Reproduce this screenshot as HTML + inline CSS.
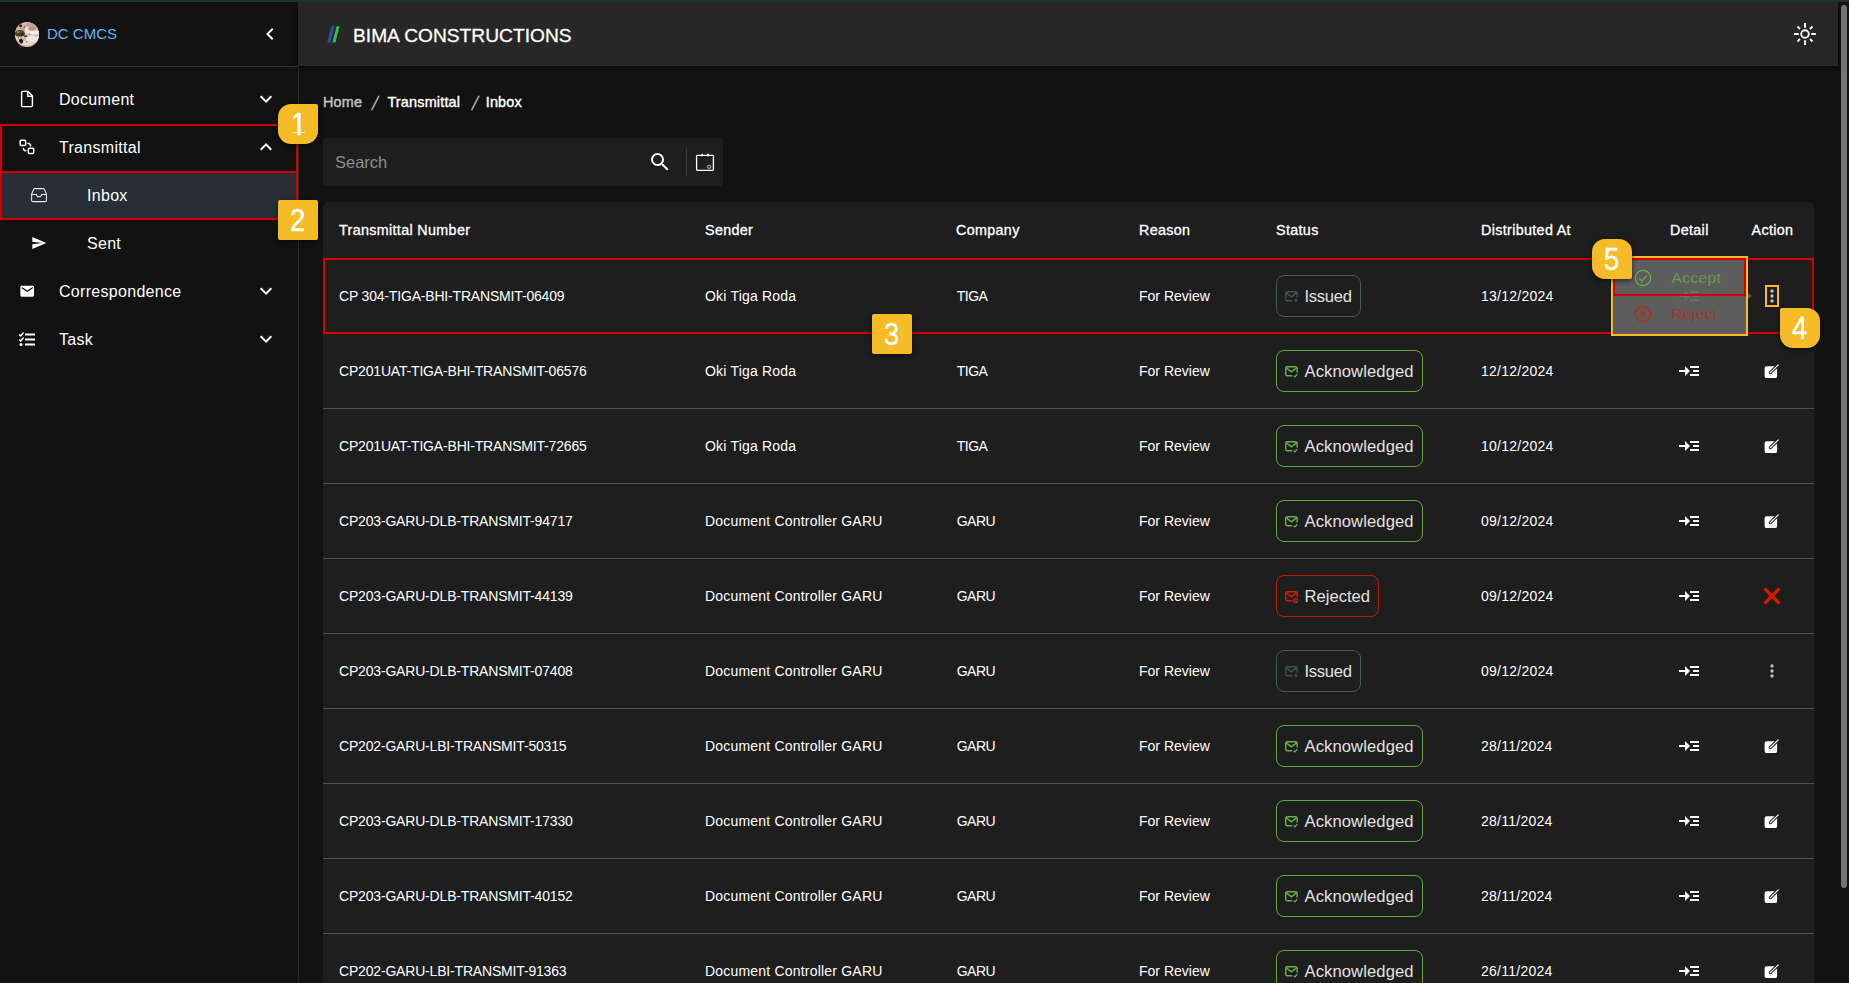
<!DOCTYPE html>
<html lang="en">
<head>
<meta charset="utf-8">
<title>DC CMCS - Transmittal Inbox</title>
<style>
*{box-sizing:border-box;margin:0;padding:0}
html,body{width:1849px;height:983px;overflow:hidden;background:#121212}
body{position:relative;font-family:"Liberation Sans",sans-serif;color:#fff;font-size:14px}
svg{display:block;position:absolute;overflow:visible}
.topstrip{position:absolute;left:0;top:0;width:1849px;height:2px;background:#203429}

/* ---------- sidebar ---------- */
.sidebar{position:absolute;left:0;top:2px;width:299px;height:981px;background:#121212;border-right:1px solid #2b2b2b}
.sb-head{position:absolute;left:0;top:0;width:298px;height:65px;border-bottom:1px solid #333}
.avatar{position:absolute;left:14.8px;top:20.3px;width:24.4px;height:24.4px;border-radius:50%;overflow:hidden;background:#d5bfb4}
.brand{position:absolute;left:47px;top:23px;font-size:15px;line-height:18px;color:#64b5f6;white-space:nowrap}
.menu{position:absolute;left:0;top:73px;width:298px;list-style:none}
.menu li{position:relative;height:48px;width:298px}
.menu li .lbl{position:absolute;left:59px;top:15.4px;font-size:16px;letter-spacing:.3px;line-height:20px;white-space:nowrap;color:#fff}
.menu li.sub .lbl{left:87px}
.menu li.active{background:#272e37}
.menu li .chev{left:254px;top:12.3px}
.redbox{position:absolute;border:2px solid #d40000;pointer-events:none}

/* ---------- top bar ---------- */
.topbar{position:absolute;left:298px;top:2px;width:1540px;height:64px;background:#272727;box-shadow:0 2px 4px rgba(0,0,0,.55)}
.title{position:absolute;left:55px;top:21.6px;font-size:19.2px;line-height:24px;white-space:nowrap;color:#fff;-webkit-text-stroke:.3px #fff}

/* ---------- content ---------- */
.crumbs{position:absolute;left:323px;top:92px;height:20px;font-size:14.4px;letter-spacing:.2px;line-height:20px;white-space:nowrap;-webkit-text-stroke:.4px currentColor}
.crumbs span{position:absolute;top:0}
.crumbs .c-home{left:0;color:#c4c4c4}
.crumbs .sep{left:46.8px;color:#b8b8b8;font-size:19.6px;letter-spacing:0;-webkit-text-stroke:0;transform:skewX(-14deg);transform-origin:0 100%;top:.8px}
.crumbs .c-b{color:#fff}
.search{position:absolute;left:323px;top:138px;width:400px;height:48px;border-radius:4px;background:#1e1e1e}
.search .ph{position:absolute;left:12px;top:14px;font-size:16.5px;line-height:20px;color:#8d8d8d}
.search .vdiv{position:absolute;left:363px;top:10px;width:1px;height:28px;background:#3b3b3b}

.table{position:absolute;left:323px;top:202px;width:1491px;height:800px;background:#1e1e1e;border-radius:6px 6px 0 0}
.thead{position:relative;height:56px}
.th{position:absolute;top:18px;font-size:14.3px;letter-spacing:.35px;line-height:20px;white-space:nowrap;color:#fff;-webkit-text-stroke:.32px #fff}
.tr{position:relative;height:75px;border-top:1px solid #505050}
.tr.first{border-top-color:transparent}
.td{position:absolute;top:27px;font-size:14px;line-height:20px;white-space:nowrap;color:#fff}
.c1{left:16px}.td.c1{letter-spacing:-.18px}.td.c3{left:633.7px;letter-spacing:-.5px}.td.c6{letter-spacing:.25px}.td.c2{letter-spacing:.2px}.c2{left:382px}.c3{left:633px}.c4{left:816px}.c5{left:953px}.c6{left:1158px}
.th.c7{left:1347px}.th.c8{left:1428.5px}
.chip{position:absolute;left:953px;top:16px;height:42px;border:1px solid #43585b;border-radius:8px;padding:0 8px 0 27.5px;white-space:nowrap}
.chip-t{position:relative;top:1px;font-size:16.6px;line-height:40px;color:#e2e2e2}
.issued .chip-t{letter-spacing:-.3px}.ack .chip-t{letter-spacing:.1px}
.chip-ic{left:8.3px;top:15px}
.ic-detail{left:1354px;top:24.8px}
.ic-edit{left:1440.5px;top:27.5px}
.ic-x{left:1437px;top:25px}
.ic-dots{left:1438.9px;top:26.9px}

/* ---------- popup ---------- */
.popup{position:absolute;left:1611px;top:256px;width:137px;height:80px;border:2px solid #f5bc27;background:rgba(98,98,98,.93)}
.popup{padding-top:2px}
.popup .pi{position:relative;height:36px}
.popup .pt{position:absolute;left:58.5px;top:8.1px;font-size:15.5px;letter-spacing:.4px;line-height:20px;-webkit-text-stroke:.35px #606060}
.popup .rej .pt{top:7.7px}
.pop-arrow{position:absolute;left:1748px;top:292.8px;width:0;height:0;border:3.2px solid transparent;border-left:4px solid #585858;border-right-width:0}
.dotbox{position:absolute;left:1765px;top:285px;width:14px;height:22px;border:2px solid #f5bc27}

/* ---------- scrollbar ---------- */
.scroll-thumb{position:absolute;left:1841px;top:5px;width:6px;height:883px;border-radius:3px;background:#747474}

/* ---------- badges ---------- */
.badge{position:absolute;width:40px;height:40px;background:#f5bc27;color:#fff;font-size:30.8px;line-height:41.4px;text-align:center;-webkit-text-stroke:.5px #fff;
 box-shadow:0 2px 5px rgba(0,0,0,.55);border-radius:2px}

.badge span{display:inline-block;line-height:1;transform:scaleX(.9)}
.badge span.one{position:relative;left:.6px;clip-path:polygon(0 0,100% 0,100% 74.8%,63% 74.8%,63% 100%,43% 100%,43% 74.8%,0 74.8%)}

</style>
</head>
<body>
<div class="topstrip"></div>

<!-- SIDEBAR -->
<nav class="sidebar">
  <div class="sb-head">
    <div class="avatar"><svg style="left:0;top:0" width="24.4" height="24.4" viewBox="0 0 24.4 24.4"><defs><filter id="avb" x="-20%" y="-20%" width="140%" height="140%"><feGaussianBlur stdDeviation="0.45"/></filter><clipPath id="avc"><circle cx="12.2" cy="12.2" r="12.2"/></clipPath></defs><g clip-path="url(#avc)"><rect x="-2" y="-2" width="29" height="29" fill="#cfb8ac"/><g filter="url(#avb)"><ellipse cx="17.5" cy="3.4" rx="7" ry="3.4" fill="#c2a598"/><ellipse cx="3" cy="5.5" rx="3" ry="3" fill="#c7aea2"/><ellipse cx="20" cy="10.6" rx="5.5" ry="2.4" fill="#f6efec"/><ellipse cx="18" cy="17" rx="7" ry="3.8" fill="#f1e7e2"/><ellipse cx="12.2" cy="8.2" rx="2.8" ry="3.8" fill="#eee3dd"/><ellipse cx="17" cy="6.8" rx="4" ry="1.8" fill="#b4968a"/><ellipse cx="21" cy="13.6" rx="3" ry="1" fill="#cdb6aa"/><ellipse cx="8" cy="7.5" rx="2" ry="2.4" fill="#b8a093"/><ellipse cx="12" cy="21" rx="6" ry="2.6" fill="#e9d8cf"/><ellipse cx="3.6" cy="16.6" rx="2.6" ry="2.2" fill="#e8d3cc"/><ellipse cx="4.8" cy="11.4" rx="5" ry="3.3" fill="#4f4028"/><ellipse cx="7.5" cy="12.6" rx="2" ry="1.2" fill="#2e2220"/><ellipse cx="3.2" cy="10" rx="1.6" ry="1" fill="#9a8a5c"/><ellipse cx="10.6" cy="14.2" rx="1.6" ry=".9" fill="#4c3d31"/><ellipse cx="6.1" cy="19" rx="1.9" ry="2.6" transform="rotate(-25 6.1 19)" fill="#26111d"/><circle cx="5.6" cy="3.8" r="1.5" fill="#33221f"/><circle cx="9.6" cy="4.8" r=".9" fill="#cf3e28"/><circle cx="11.7" cy="19.6" r=".7" fill="#6d3a30"/><circle cx="3.4" cy="15.8" r=".6" fill="#4a2f3a"/></g></g></svg></div>
    <div class="brand">DC CMCS</div>
    <svg style="left:258.4px;top:20.2px" width="24" height="24" viewBox="0 0 24 24"><path fill="#fff" d="M15.41,16.58L10.83,12L15.41,7.41L14,6L8,12L14,18L15.41,16.58Z"/></svg>
  </div>
  <ul class="menu">
    <li>
      <svg style="left:20px;top:15px" width="14" height="18" viewBox="0 0 14 18"><path d="M1.6 2.4a1 1 0 0 1 1-1H8l4.4 4.4v9.8a1 1 0 0 1-1 1H2.6a1 1 0 0 1-1-1z" fill="none" stroke="#fff" stroke-width="1.4" stroke-linejoin="round"/><path d="M7.8 1.6v4.6h4.4" fill="none" stroke="#fff" stroke-width="1.4"/></svg>
      <span class="lbl">Document</span>
      <svg class="chev" width="24" height="24" viewBox="0 0 24 24"><path fill="#fff" d="M7.41,8.58L12,13.17L16.59,8.58L18,10L12,16L6,10L7.41,8.58Z"/></svg>
    </li>
    <li>
      <svg style="left:19px;top:16px" width="16" height="16" viewBox="0 0 16 16"><rect x="1.15" y="1.15" width="5.5" height="5.4" rx="1.4" fill="none" stroke="#fff" stroke-width="1.5"/><rect x="9.25" y="9.25" width="5.5" height="5.3" rx="1.4" fill="none" stroke="#fff" stroke-width="1.5"/><path d="M8.9 4.3Q11.5 4.5 11.7 6.9" fill="none" stroke="#fff" stroke-width="1.4" stroke-linecap="round"/><path d="M4.3 9.4Q4.5 11.5 6.7 11.7" fill="none" stroke="#fff" stroke-width="1.4" stroke-linecap="round"/></svg>
      <span class="lbl">Transmittal</span>
      <svg class="chev" width="24" height="24" viewBox="0 0 24 24"><path fill="#fff" d="M7.41,15.41L12,10.83L16.59,15.41L18,14L12,8L6,14L7.41,15.41Z"/></svg>
    </li>
    <li class="sub active">
      <svg style="left:30px;top:15.8px" width="18" height="16" viewBox="0 0 18 16"><path d="M1.6 7.3L3.6 2.4a1.2 1.2 0 0 1 1.1-.8h8.6a1.2 1.2 0 0 1 1.1.8l2 4.9v6.1a1.2 1.2 0 0 1-1.2 1.2H2.8a1.2 1.2 0 0 1-1.2-1.2z" fill="none" stroke="#ececec" stroke-width="1.05" stroke-linejoin="round"/><path d="M1.6 7.4h4.6c.3 1.5 1.4 2.4 2.8 2.4s2.5-.9 2.8-2.4h4.6" fill="none" stroke="#ececec" stroke-width="1.05"/></svg>
      <span class="lbl">Inbox</span>
    </li>
    <li class="sub">
      <svg style="left:30.7px;top:16.2px" width="16" height="16" viewBox="0 0 24 24"><path fill="#fff" d="M2,21L23,12L2,3V10L17,12L2,14V21Z"/></svg>
      <span class="lbl">Sent</span>
    </li>
    <li>
      <svg style="left:18.9px;top:15.8px" width="16.4" height="16.4" viewBox="0 0 24 24"><path fill="#fff" d="M20,8L12,13L4,8V6L12,11L20,6M20,4H4C2.89,4 2,4.89 2,6V18A2,2 0 0,0 4,20H20A2,2 0 0,0 22,18V6C22,4.89 21.1,4 20,4Z"/></svg>
      <span class="lbl">Correspondence</span>
      <svg class="chev" width="24" height="24" viewBox="0 0 24 24"><path fill="#fff" d="M7.41,8.58L12,13.17L16.59,8.58L18,10L12,16L6,10L7.41,8.58Z"/></svg>
    </li>
    <li>
      <svg style="left:18px;top:15.9px" width="18" height="16" viewBox="0 0 18 16"><path d="M7 3.5h10M7 8.5h10M7 13.5h10" stroke="#fff" stroke-width="2"/><path d="M1.2 3.6l1.5 1.4L5.6 1.6M1.2 8.6l1.5 1.4L5.6 6.6" fill="none" stroke="#fff" stroke-width="1.5"/><circle cx="3" cy="13.5" r="1.5" fill="#fff"/></svg>
      <span class="lbl">Task</span>
      <svg class="chev" width="24" height="24" viewBox="0 0 24 24"><path fill="#fff" d="M7.41,8.58L12,13.17L16.59,8.58L18,10L12,16L6,10L7.41,8.58Z"/></svg>
    </li>
  </ul>
</nav>

<!-- TOP BAR -->
<header class="topbar">
  <svg style="left:29px;top:24px" width="14" height="17" viewBox="0 0 14 17"><path d="M4.5.2h3L3.3 16.6H.3z" fill="#2b50a6"/><path d="M9.6.2h3L8.4 16.6H5.4z" fill="#3dbb4e"/></svg>
  <div class="title">BIMA CONSTRUCTIONS</div>
  <svg style="left:1495px;top:20px" width="24" height="24" viewBox="0 0 24 24"><circle cx="12" cy="12" r="3.8" fill="none" stroke="#fff" stroke-width="1.9"/><path d="M12 1.1v4.6M12 18.3v4.6M1.1 12h4.6M18.3 12h4.6M4.5 4.5l2.5 2.5M17 17l2.5 2.5M19.5 4.5l-2.5 2.5M7 17l-2.5 2.5" stroke="#fff" stroke-width="1.9"/></svg>
</header>

<!-- CONTENT -->
<main id="content">
  <div class="crumbs"><span class="c-home">Home</span><span class="sep">/</span><span class="c-b" style="left:64.4px">Transmittal</span><span class="sep" style="left:147px">/</span><span class="c-b" style="left:162.7px">Inbox</span></div>

  <div class="search">
    <span class="ph">Search</span>
    <svg style="left:324.8px;top:11.8px" width="24" height="24" viewBox="0 0 24 24"><path fill="#fff" d="M9.5,3A6.5,6.5 0 0,1 16,9.5C16,11.11 15.41,12.59 14.44,13.73L14.71,14H15.5L20.5,19L19,20.5L14,15.5V14.71L13.73,14.44C12.59,15.41 11.11,16 9.5,16A6.5,6.5 0 0,1 3,9.5A6.5,6.5 0 0,1 9.5,3M9.5,5C7,5 5,7 5,9.5C5,12 7,14 9.5,14C12,14 14,12 14,9.5C14,7 12,5 9.5,5Z"/></svg>
    <span class="vdiv"></span>
    <svg style="left:372px;top:14px" width="20" height="20" viewBox="0 0 20 20"><rect x="1.6" y="3.3" width="16.8" height="15" rx=".7" fill="none" stroke="#fff" stroke-width="1.3"/><path d="M7.2 1.7v2.6M13.1 1.7v2.6" stroke="#fff" stroke-width="1.7"/><rect x="12.6" y="13.3" width="3" height="3" rx="1" fill="none" stroke="#d0d0d0" stroke-width="1"/></svg>
  </div>

  <section class="table">
    <div class="thead">
      <span class="th c1">Transmittal Number</span><span class="th c2">Sender</span><span class="th c3">Company</span><span class="th c4">Reason</span><span class="th c5">Status</span><span class="th c6">Distributed At</span><span class="th c7">Detail</span><span class="th c8">Action</span>
    </div>
<div class="tr first"><span class="td c1">CP 304-TIGA-BHI-TRANSMIT-06409</span><span class="td c2">Oki Tiga Roda</span><span class="td c3">TIGA</span><span class="td c4">For Review</span><span class="chip issued" style="border-color:#43585b"><svg class="chip-ic" width="13" height="12" viewBox="0 0 13 12"><path d="M7.2 9.8H2.2a1.5 1.5 0 0 1-1.5-1.5V2.3A1.5 1.5 0 0 1 2.2.8h8.4a1.5 1.5 0 0 1 1.5 1.5V6.4" fill="none" stroke="#3e5356" stroke-width="1.4"/><path d="M1 1.6l5.4 4.2L11.8 1.6" fill="none" stroke="#3e5356" stroke-width="1.4"/><path d="M10.9 11.6V8.4m-1.3 1.2l1.3-1.3 1.3 1.3" fill="none" stroke="#3e5356" stroke-width="1.1"/></svg><span class="chip-t">Issued</span></span><span class="td c6">13/12/2024</span><svg class="ic-detail" width="24" height="24" viewBox="0 0 24 24"><path fill="#fff" d="M13 7h9v2h-9zM13 15h9v2h-9zM16 11h6v2h-6zM13 12L8 7v4H2v2h6v4z"/></svg><svg class="ic-dots" width="20" height="20" viewBox="0 0 20 20"><circle cx="10" cy="5" r="1.7" fill="#bdbdbd"/><circle cx="10" cy="10" r="1.7" fill="#bdbdbd"/><circle cx="10" cy="15" r="1.7" fill="#bdbdbd"/></svg></div>
<div class="tr"><span class="td c1">CP201UAT-TIGA-BHI-TRANSMIT-06576</span><span class="td c2">Oki Tiga Roda</span><span class="td c3">TIGA</span><span class="td c4">For Review</span><span class="chip ack" style="border-color:#64a845"><svg class="chip-ic" width="13" height="12" viewBox="0 0 13 12"><path d="M7.2 9.8H2.2a1.5 1.5 0 0 1-1.5-1.5V2.3A1.5 1.5 0 0 1 2.2.8h8.4a1.5 1.5 0 0 1 1.5 1.5V6.4" fill="none" stroke="#68b04a" stroke-width="1.4"/><path d="M1 1.6l5.4 4.2L11.8 1.6" fill="none" stroke="#68b04a" stroke-width="1.4"/><path d="M8.6 9.6l1.3 1.3 2.4-2.6" fill="none" stroke="#68b04a" stroke-width="1.3"/></svg><span class="chip-t">Acknowledged</span></span><span class="td c6">12/12/2024</span><svg class="ic-detail" width="24" height="24" viewBox="0 0 24 24"><path fill="#fff" d="M13 7h9v2h-9zM13 15h9v2h-9zM16 11h6v2h-6zM13 12L8 7v4H2v2h6v4z"/></svg><svg class="ic-edit" width="18" height="18" viewBox="0 0 18 18"><rect x="0.6" y="4.2" width="12.5" height="11.9" rx="2.2" fill="#fff"/><path d="M6.4 10.6L14.1 3" stroke="#1e1e1e" stroke-width="3.2" stroke-linecap="round"/><path d="M6.25 10.75L14.3 2.85" stroke="#fff" stroke-width="1.15" stroke-linecap="round"/></svg></div>
<div class="tr"><span class="td c1">CP201UAT-TIGA-BHI-TRANSMIT-72665</span><span class="td c2">Oki Tiga Roda</span><span class="td c3">TIGA</span><span class="td c4">For Review</span><span class="chip ack" style="border-color:#64a845"><svg class="chip-ic" width="13" height="12" viewBox="0 0 13 12"><path d="M7.2 9.8H2.2a1.5 1.5 0 0 1-1.5-1.5V2.3A1.5 1.5 0 0 1 2.2.8h8.4a1.5 1.5 0 0 1 1.5 1.5V6.4" fill="none" stroke="#68b04a" stroke-width="1.4"/><path d="M1 1.6l5.4 4.2L11.8 1.6" fill="none" stroke="#68b04a" stroke-width="1.4"/><path d="M8.6 9.6l1.3 1.3 2.4-2.6" fill="none" stroke="#68b04a" stroke-width="1.3"/></svg><span class="chip-t">Acknowledged</span></span><span class="td c6">10/12/2024</span><svg class="ic-detail" width="24" height="24" viewBox="0 0 24 24"><path fill="#fff" d="M13 7h9v2h-9zM13 15h9v2h-9zM16 11h6v2h-6zM13 12L8 7v4H2v2h6v4z"/></svg><svg class="ic-edit" width="18" height="18" viewBox="0 0 18 18"><rect x="0.6" y="4.2" width="12.5" height="11.9" rx="2.2" fill="#fff"/><path d="M6.4 10.6L14.1 3" stroke="#1e1e1e" stroke-width="3.2" stroke-linecap="round"/><path d="M6.25 10.75L14.3 2.85" stroke="#fff" stroke-width="1.15" stroke-linecap="round"/></svg></div>
<div class="tr"><span class="td c1">CP203-GARU-DLB-TRANSMIT-94717</span><span class="td c2">Document Controller GARU</span><span class="td c3">GARU</span><span class="td c4">For Review</span><span class="chip ack" style="border-color:#64a845"><svg class="chip-ic" width="13" height="12" viewBox="0 0 13 12"><path d="M7.2 9.8H2.2a1.5 1.5 0 0 1-1.5-1.5V2.3A1.5 1.5 0 0 1 2.2.8h8.4a1.5 1.5 0 0 1 1.5 1.5V6.4" fill="none" stroke="#68b04a" stroke-width="1.4"/><path d="M1 1.6l5.4 4.2L11.8 1.6" fill="none" stroke="#68b04a" stroke-width="1.4"/><path d="M8.6 9.6l1.3 1.3 2.4-2.6" fill="none" stroke="#68b04a" stroke-width="1.3"/></svg><span class="chip-t">Acknowledged</span></span><span class="td c6">09/12/2024</span><svg class="ic-detail" width="24" height="24" viewBox="0 0 24 24"><path fill="#fff" d="M13 7h9v2h-9zM13 15h9v2h-9zM16 11h6v2h-6zM13 12L8 7v4H2v2h6v4z"/></svg><svg class="ic-edit" width="18" height="18" viewBox="0 0 18 18"><rect x="0.6" y="4.2" width="12.5" height="11.9" rx="2.2" fill="#fff"/><path d="M6.4 10.6L14.1 3" stroke="#1e1e1e" stroke-width="3.2" stroke-linecap="round"/><path d="M6.25 10.75L14.3 2.85" stroke="#fff" stroke-width="1.15" stroke-linecap="round"/></svg></div>
<div class="tr"><span class="td c1">CP203-GARU-DLB-TRANSMIT-44139</span><span class="td c2">Document Controller GARU</span><span class="td c3">GARU</span><span class="td c4">For Review</span><span class="chip rej" style="border-color:#c41c08"><svg class="chip-ic" width="13" height="12" viewBox="0 0 13 12"><path d="M7.2 9.8H2.2a1.5 1.5 0 0 1-1.5-1.5V2.3A1.5 1.5 0 0 1 2.2.8h8.4a1.5 1.5 0 0 1 1.5 1.5V6.4" fill="none" stroke="#d21f0a" stroke-width="1.4"/><path d="M1 1.6l5.4 4.2L11.8 1.6" fill="none" stroke="#d21f0a" stroke-width="1.4"/><circle cx="10.6" cy="9.6" r="2" fill="none" stroke="#d21f0a" stroke-width="1.2"/><path d="M9.3 8.3l2.6 2.6" stroke="#d21f0a" stroke-width="1"/></svg><span class="chip-t">Rejected</span></span><span class="td c6">09/12/2024</span><svg class="ic-detail" width="24" height="24" viewBox="0 0 24 24"><path fill="#fff" d="M13 7h9v2h-9zM13 15h9v2h-9zM16 11h6v2h-6zM13 12L8 7v4H2v2h6v4z"/></svg><svg class="ic-x" width="24" height="24" viewBox="0 0 24 24"><path d="M5.5 5.5l13 13M18.5 5.5l-13 13" stroke="#c81a04" stroke-width="3.6" stroke-linecap="round" fill="none"/></svg></div>
<div class="tr"><span class="td c1">CP203-GARU-DLB-TRANSMIT-07408</span><span class="td c2">Document Controller GARU</span><span class="td c3">GARU</span><span class="td c4">For Review</span><span class="chip issued" style="border-color:#43585b"><svg class="chip-ic" width="13" height="12" viewBox="0 0 13 12"><path d="M7.2 9.8H2.2a1.5 1.5 0 0 1-1.5-1.5V2.3A1.5 1.5 0 0 1 2.2.8h8.4a1.5 1.5 0 0 1 1.5 1.5V6.4" fill="none" stroke="#3e5356" stroke-width="1.4"/><path d="M1 1.6l5.4 4.2L11.8 1.6" fill="none" stroke="#3e5356" stroke-width="1.4"/><path d="M10.9 11.6V8.4m-1.3 1.2l1.3-1.3 1.3 1.3" fill="none" stroke="#3e5356" stroke-width="1.1"/></svg><span class="chip-t">Issued</span></span><span class="td c6">09/12/2024</span><svg class="ic-detail" width="24" height="24" viewBox="0 0 24 24"><path fill="#fff" d="M13 7h9v2h-9zM13 15h9v2h-9zM16 11h6v2h-6zM13 12L8 7v4H2v2h6v4z"/></svg><svg class="ic-dots" width="20" height="20" viewBox="0 0 20 20"><circle cx="10" cy="5" r="1.7" fill="#bdbdbd"/><circle cx="10" cy="10" r="1.7" fill="#bdbdbd"/><circle cx="10" cy="15" r="1.7" fill="#bdbdbd"/></svg></div>
<div class="tr"><span class="td c1">CP202-GARU-LBI-TRANSMIT-50315</span><span class="td c2">Document Controller GARU</span><span class="td c3">GARU</span><span class="td c4">For Review</span><span class="chip ack" style="border-color:#64a845"><svg class="chip-ic" width="13" height="12" viewBox="0 0 13 12"><path d="M7.2 9.8H2.2a1.5 1.5 0 0 1-1.5-1.5V2.3A1.5 1.5 0 0 1 2.2.8h8.4a1.5 1.5 0 0 1 1.5 1.5V6.4" fill="none" stroke="#68b04a" stroke-width="1.4"/><path d="M1 1.6l5.4 4.2L11.8 1.6" fill="none" stroke="#68b04a" stroke-width="1.4"/><path d="M8.6 9.6l1.3 1.3 2.4-2.6" fill="none" stroke="#68b04a" stroke-width="1.3"/></svg><span class="chip-t">Acknowledged</span></span><span class="td c6">28/11/2024</span><svg class="ic-detail" width="24" height="24" viewBox="0 0 24 24"><path fill="#fff" d="M13 7h9v2h-9zM13 15h9v2h-9zM16 11h6v2h-6zM13 12L8 7v4H2v2h6v4z"/></svg><svg class="ic-edit" width="18" height="18" viewBox="0 0 18 18"><rect x="0.6" y="4.2" width="12.5" height="11.9" rx="2.2" fill="#fff"/><path d="M6.4 10.6L14.1 3" stroke="#1e1e1e" stroke-width="3.2" stroke-linecap="round"/><path d="M6.25 10.75L14.3 2.85" stroke="#fff" stroke-width="1.15" stroke-linecap="round"/></svg></div>
<div class="tr"><span class="td c1">CP203-GARU-DLB-TRANSMIT-17330</span><span class="td c2">Document Controller GARU</span><span class="td c3">GARU</span><span class="td c4">For Review</span><span class="chip ack" style="border-color:#64a845"><svg class="chip-ic" width="13" height="12" viewBox="0 0 13 12"><path d="M7.2 9.8H2.2a1.5 1.5 0 0 1-1.5-1.5V2.3A1.5 1.5 0 0 1 2.2.8h8.4a1.5 1.5 0 0 1 1.5 1.5V6.4" fill="none" stroke="#68b04a" stroke-width="1.4"/><path d="M1 1.6l5.4 4.2L11.8 1.6" fill="none" stroke="#68b04a" stroke-width="1.4"/><path d="M8.6 9.6l1.3 1.3 2.4-2.6" fill="none" stroke="#68b04a" stroke-width="1.3"/></svg><span class="chip-t">Acknowledged</span></span><span class="td c6">28/11/2024</span><svg class="ic-detail" width="24" height="24" viewBox="0 0 24 24"><path fill="#fff" d="M13 7h9v2h-9zM13 15h9v2h-9zM16 11h6v2h-6zM13 12L8 7v4H2v2h6v4z"/></svg><svg class="ic-edit" width="18" height="18" viewBox="0 0 18 18"><rect x="0.6" y="4.2" width="12.5" height="11.9" rx="2.2" fill="#fff"/><path d="M6.4 10.6L14.1 3" stroke="#1e1e1e" stroke-width="3.2" stroke-linecap="round"/><path d="M6.25 10.75L14.3 2.85" stroke="#fff" stroke-width="1.15" stroke-linecap="round"/></svg></div>
<div class="tr"><span class="td c1">CP203-GARU-DLB-TRANSMIT-40152</span><span class="td c2">Document Controller GARU</span><span class="td c3">GARU</span><span class="td c4">For Review</span><span class="chip ack" style="border-color:#64a845"><svg class="chip-ic" width="13" height="12" viewBox="0 0 13 12"><path d="M7.2 9.8H2.2a1.5 1.5 0 0 1-1.5-1.5V2.3A1.5 1.5 0 0 1 2.2.8h8.4a1.5 1.5 0 0 1 1.5 1.5V6.4" fill="none" stroke="#68b04a" stroke-width="1.4"/><path d="M1 1.6l5.4 4.2L11.8 1.6" fill="none" stroke="#68b04a" stroke-width="1.4"/><path d="M8.6 9.6l1.3 1.3 2.4-2.6" fill="none" stroke="#68b04a" stroke-width="1.3"/></svg><span class="chip-t">Acknowledged</span></span><span class="td c6">28/11/2024</span><svg class="ic-detail" width="24" height="24" viewBox="0 0 24 24"><path fill="#fff" d="M13 7h9v2h-9zM13 15h9v2h-9zM16 11h6v2h-6zM13 12L8 7v4H2v2h6v4z"/></svg><svg class="ic-edit" width="18" height="18" viewBox="0 0 18 18"><rect x="0.6" y="4.2" width="12.5" height="11.9" rx="2.2" fill="#fff"/><path d="M6.4 10.6L14.1 3" stroke="#1e1e1e" stroke-width="3.2" stroke-linecap="round"/><path d="M6.25 10.75L14.3 2.85" stroke="#fff" stroke-width="1.15" stroke-linecap="round"/></svg></div>
<div class="tr"><span class="td c1">CP202-GARU-LBI-TRANSMIT-91363</span><span class="td c2">Document Controller GARU</span><span class="td c3">GARU</span><span class="td c4">For Review</span><span class="chip ack" style="border-color:#64a845"><svg class="chip-ic" width="13" height="12" viewBox="0 0 13 12"><path d="M7.2 9.8H2.2a1.5 1.5 0 0 1-1.5-1.5V2.3A1.5 1.5 0 0 1 2.2.8h8.4a1.5 1.5 0 0 1 1.5 1.5V6.4" fill="none" stroke="#68b04a" stroke-width="1.4"/><path d="M1 1.6l5.4 4.2L11.8 1.6" fill="none" stroke="#68b04a" stroke-width="1.4"/><path d="M8.6 9.6l1.3 1.3 2.4-2.6" fill="none" stroke="#68b04a" stroke-width="1.3"/></svg><span class="chip-t">Acknowledged</span></span><span class="td c6">26/11/2024</span><svg class="ic-detail" width="24" height="24" viewBox="0 0 24 24"><path fill="#fff" d="M13 7h9v2h-9zM13 15h9v2h-9zM16 11h6v2h-6zM13 12L8 7v4H2v2h6v4z"/></svg><svg class="ic-edit" width="18" height="18" viewBox="0 0 18 18"><rect x="0.6" y="4.2" width="12.5" height="11.9" rx="2.2" fill="#fff"/><path d="M6.4 10.6L14.1 3" stroke="#1e1e1e" stroke-width="3.2" stroke-linecap="round"/><path d="M6.25 10.75L14.3 2.85" stroke="#fff" stroke-width="1.15" stroke-linecap="round"/></svg></div>
  </section>

  <!-- row highlight -->
  <div class="redbox" style="left:323px;top:258px;width:1491px;height:76px"></div>

  <!-- action popup -->
  <div class="pop-arrow"></div>
  <div class="popup">
    <div class="pi acc"><svg style="left:21px;top:9px" width="18" height="18" viewBox="0 0 18 18"><circle cx="9" cy="9" r="7.7" fill="none" stroke="#6ab04c" stroke-width="1.2"/><path d="M5.2 9.4l2.5 2.5 5-5.3" fill="none" stroke="#6ab04c" stroke-width="1.2"/></svg><span class="pt" style="color:#6ab04c">Accept</span></div>
    <div class="pi rej"><svg style="left:21px;top:8.6px" width="18" height="18" viewBox="0 0 18 18"><circle cx="9" cy="9" r="7.7" fill="none" stroke="#c9220c" stroke-width="1.2"/><path d="M6.2 6.2l5.6 5.6M11.8 6.2l-5.6 5.6" fill="none" stroke="#c9220c" stroke-width="1.2"/></svg><span class="pt" style="color:#c9220c">Reject</span></div>
    <div class="redbox" style="left:0;top:0;width:133px;height:38px"></div>
  </div>
  <div class="dotbox"></div>
</main>

<!-- sidebar highlight boxes -->
<div class="redbox" style="left:0;top:124px;width:298px;height:49px;border-left-width:2px"></div>
<div class="redbox" style="left:0;top:171px;width:298px;height:49px;border-left-width:2px"></div>

<!-- step badges -->
<div class="badge" style="left:278px;top:104px;border-radius:13px 2px 13px 13px"><span class="one">1</span></div>
<div class="badge" style="left:278px;top:200px"><span>2</span></div>
<div class="badge" style="left:872px;top:314px"><span>3</span></div>
<div class="badge" style="left:1780px;top:308px;border-radius:2px 13px 13px 13px"><span>4</span></div>
<div class="badge" style="left:1592px;top:239px;border-radius:13px 13px 2px 13px"><span>5</span></div>

<div class="scroll-thumb"></div>
</body>
</html>
